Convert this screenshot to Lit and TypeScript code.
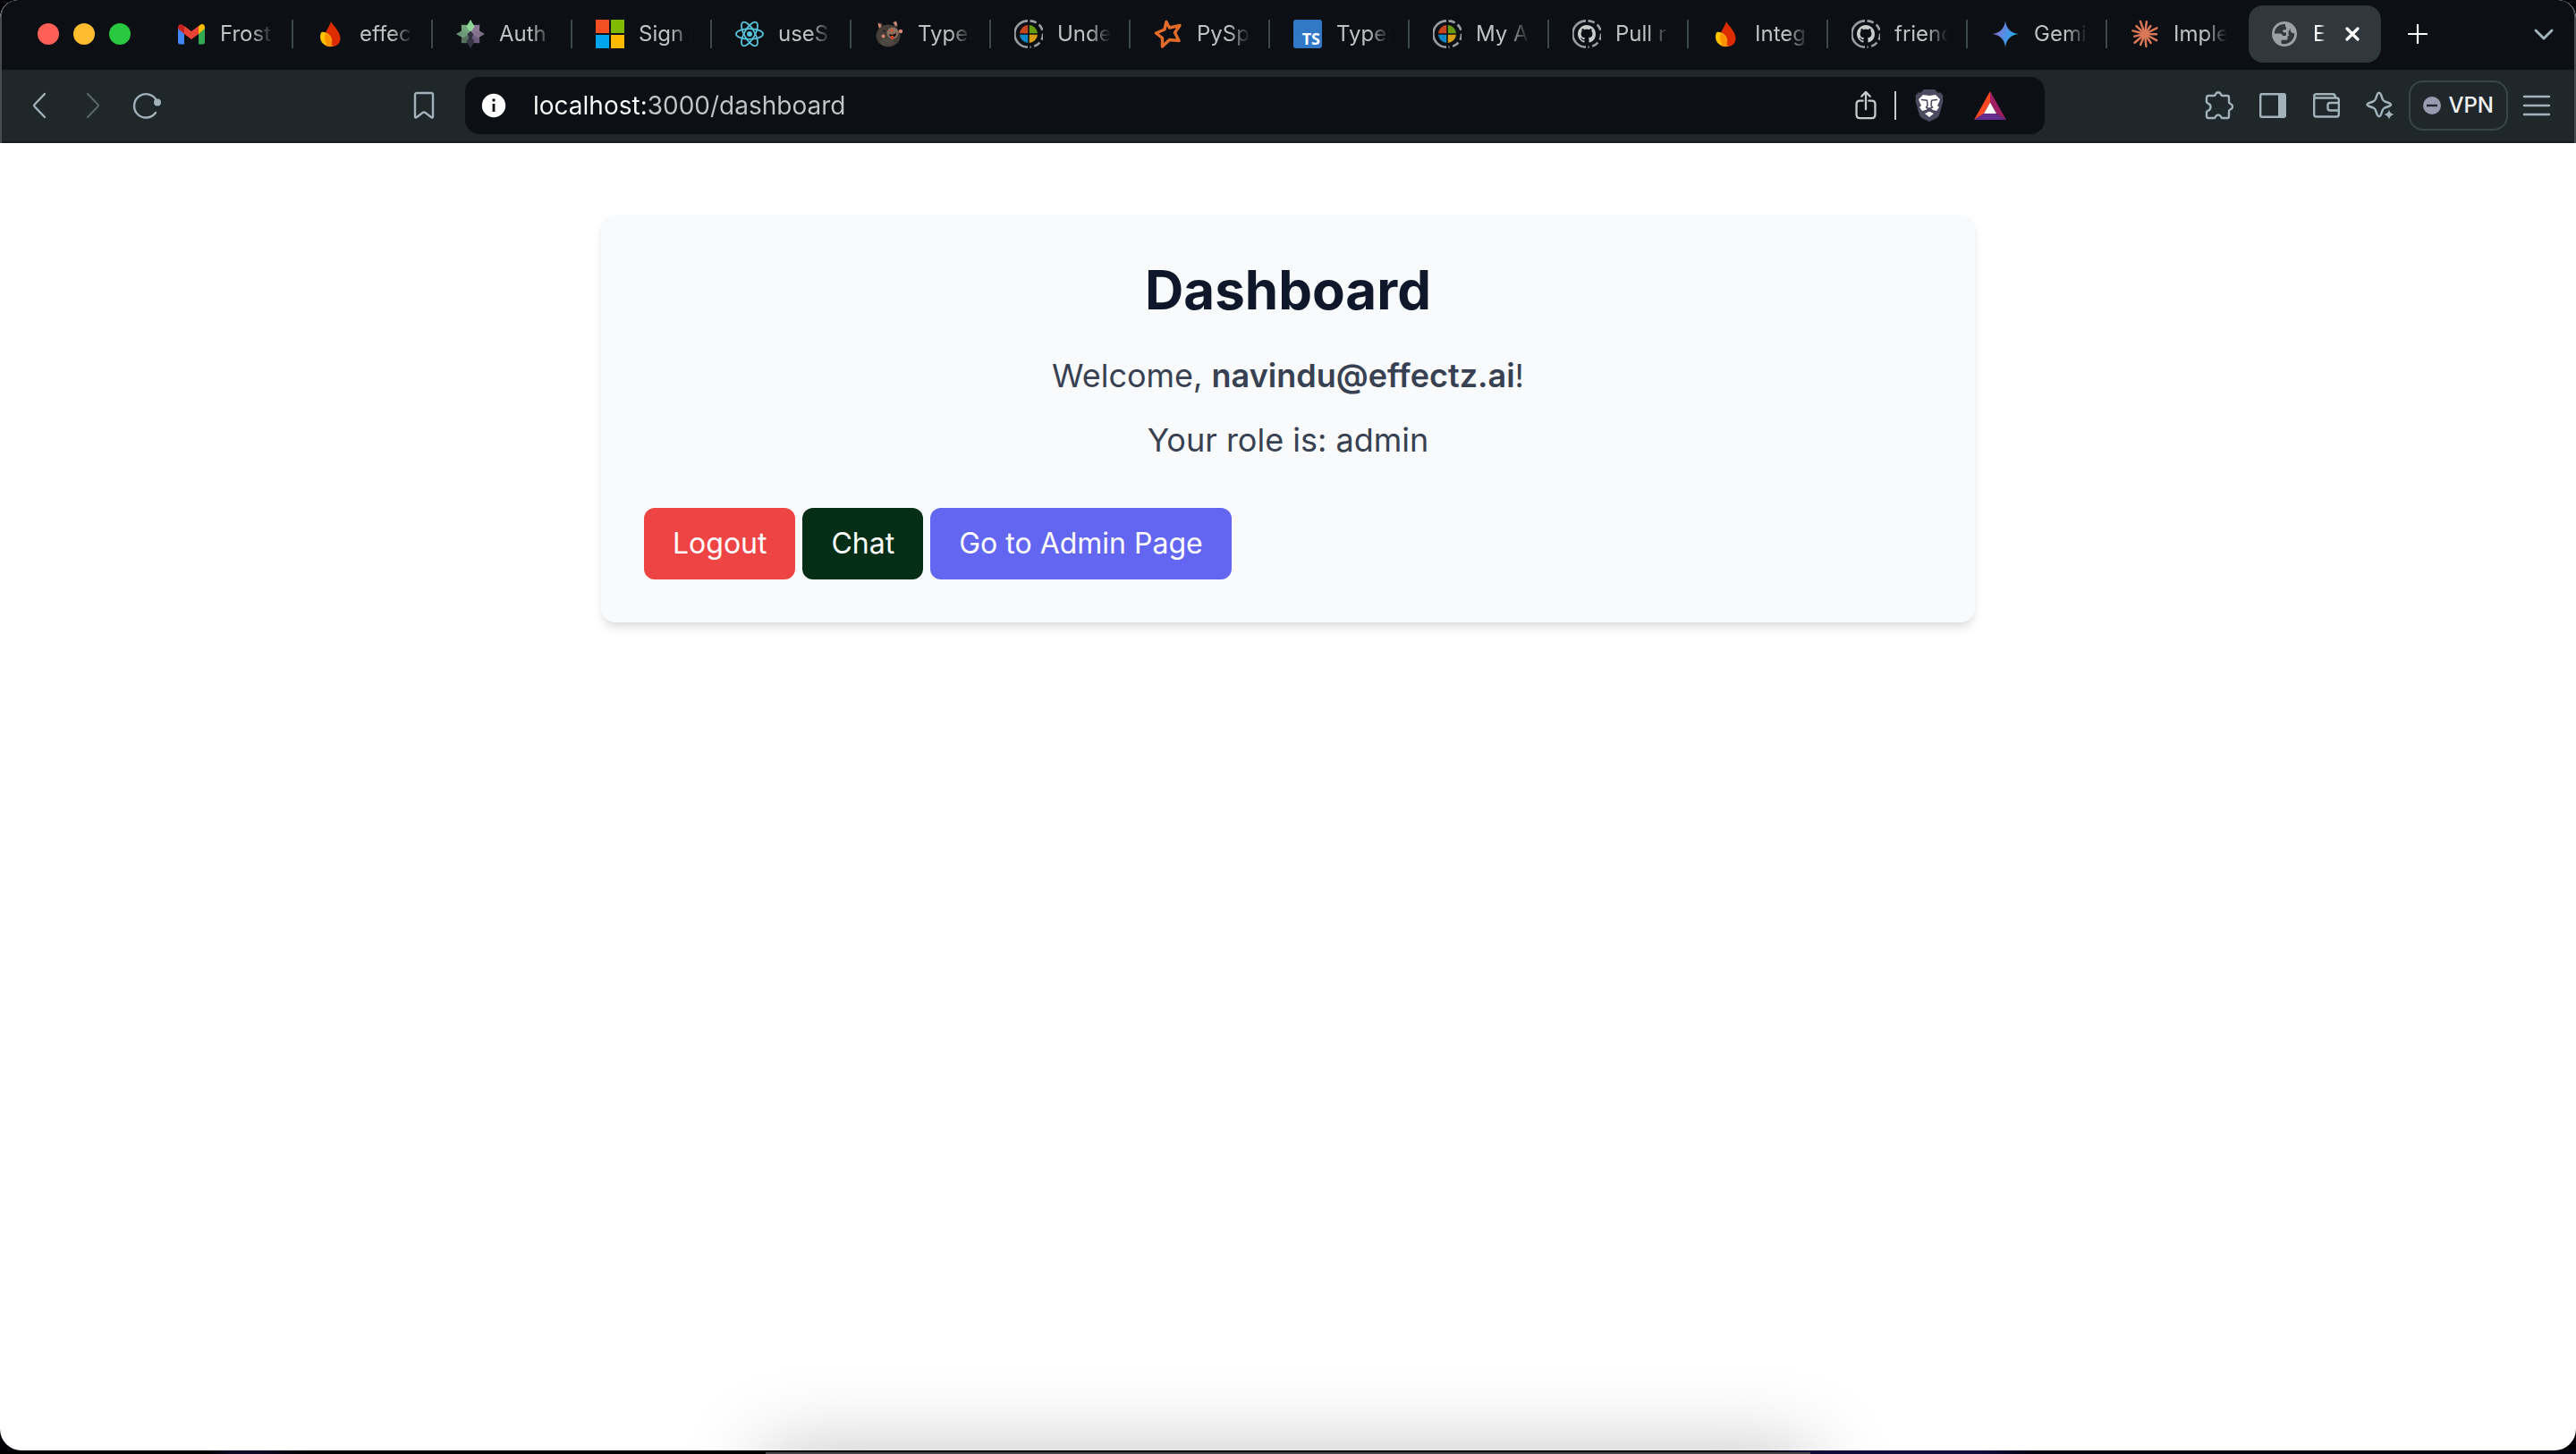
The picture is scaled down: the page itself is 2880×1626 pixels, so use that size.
import { LitElement, html, svg, css, TemplateResult } from "lit";
import { customElement, property } from "lit/decorators.js";
import { classMap } from "lit/directives/class-map.js";

/* ---------- favicons, 32 x 32 ---------- */

const gmail = svg`
  <path fill="#4285f4" d="M1 9v16.500a2 2 0 0 0 2 2h5V15z"/>
  <path fill="#34a853" d="M24 15v12.500h5a2 2 0 0 0 2-2V9z"/>
  <path fill="#fbbc04" d="M24 7.500V16l7-6V8.500c0-3-3-4.600-5.500-2.400z"/>
  <path fill="#ea4335" d="M8 16V7l8 6 8-6v9l-8 6z"/>
  <path fill="#c5221f" d="M1 8.500V10l7 6V7.500L6.500 6.100C4 4.300 1 5.500 1 8.500z"/>`;

const flame = svg`
  <path fill="#dd2c00" d="M16 2c1.500 4 10 10 10.500 18.500C26.500 26 23 30 17.500 30S9 26 9 20C9 13 14 9 16 2z"/>
  <path fill="#ffc400" d="M5.500 14c5-1 10 3 11.500 8 .8 3.500-.5 6.500-2.500 7.700C9 29.500 4 25.500 4 19c0-2 .5-4 1.500-5z"/>
  <path fill="#ff9100" d="M10 15.500c4 1.500 6.500 5 7 8.500.3 2.500-.8 4.800-2.500 5.700C11 28.500 9 25 9 20c0-1.700.3-3 1-4.500z"/>
  <path fill="#ff9100" d="M9 28.500c3 2 7 2 10 1-2.500-2-6-2.500-10-1z"/>`;

/* Star of four kites over four squarer diagonal petals, green on the left, purple on the right. */
const DIAGONAL = ["#8b7698", "#6b5a7c", "#55705f", "#74a57f"];
const STRAIGHT = ["#93dc9b", "#85738f", "#393545", "#6f9c79"];
const burst = svg`
  ${DIAGONAL.map((c, i) => svg`<polygon transform="rotate(${45 + i * 90} 16 16)" fill=${c} points="16,1.500 22.500,8.500 16,16 9.500,8.500"/>`)}
  ${STRAIGHT.map((c, i) => svg`<polygon transform="rotate(${i * 90} 16 16)" fill=${c} fill-opacity="0.95" points="16,0 20.500,7.500 16,15 11.500,7.500"/>`)}
  <path fill="#332f40" d="M16 12.500l3.500 4-3.500 6-3.500-6z"/>`;

const windowsMark = svg`
  <path fill="#f25022" d="M0 0h15v15H0z"/><path fill="#7fba00" d="M17 0h15v15H17z"/>
  <path fill="#00a4ef" d="M0 17h15v15H0z"/><path fill="#ffb900" d="M17 17h15v15H17z"/>`;

const react = svg`
  <g fill="none" stroke="#58c4dc" stroke-width="1.800">
    ${[0, 60, 120].map((a) => svg`<ellipse cx="16" cy="16" rx="15" ry="5.800" transform="rotate(${a} 16 16)"/>`)}
  </g><circle cx="16" cy="16" r="3" fill="#58c4dc"/>`;

const bear = svg`
  <path fill="#4c433d" d="M3 3l5 1 1 5-4 2zM20 3l4-2 2 6-3 3z"/>
  <path fill="#d98872" d="M3.500 4.500l3 .5 1 4-2.500 1zM21 3l3-1 1 4-2 1z"/>
  <ellipse cx="15" cy="18" rx="13.500" ry="12.500" fill="#453e39"/>
  <ellipse cx="14" cy="25" rx="8" ry="4" fill="#4f4741"/>
  <path fill="none" stroke="#4c433d" stroke-width="3" d="M24 15l4-2"/>
  <circle cx="29" cy="13" r="2.200" fill="#d98872"/>
  <circle cx="20" cy="15" r="6.500" fill="#8b6f5f"/>
  <ellipse cx="19" cy="12" rx="1.800" ry="1.200" fill="#e0572a"/>
  <path fill="#1e1512" d="M16 16c3 1.500 6 .5 8-1.500.5 3-2 5.500-4.500 5.300C17.500 19.600 16.300 18 16 16z"/>
  <path fill="#d8422b" d="M18 18h3v3.500q-1.500 1-3 0z"/>
  <circle cx="9.500" cy="18.500" r="1.900" fill="#d98872"/><circle cx="10.500" cy="12.500" r="1.100" fill="#15110f"/>`;

/* Ring drawn around the favicon of a sleeping tab: solid left half, dashed right half. */
const ring = svg`<g fill="none" stroke="#989da3" stroke-width="2.600">
  <path d="M15 1.400A14.600 14.600 0 0 0 15 30.600"/>
  <path stroke-dasharray="7.500 3.600" d="M17.500 1.400A14.600 14.600 0 0 1 17.500 30.600"/></g>`;

const azure = svg`${ring}
  <path fill="#c8441c" d="M15.200 6v9.200H6A10 10 0 0 1 15.200 6z"/>
  <path fill="#669a10" d="M16.800 6v9.200H26A10 10 0 0 0 16.800 6z"/>
  <path fill="#0d88c4" d="M15.200 26v-9.200H6A10 10 0 0 0 15.200 26z"/>
  <path fill="#d79d14" d="M16.800 26v-9.200H26A10 10 0 0 1 16.800 26z"/>`;

const github = svg`${ring}
  <path transform="translate(6 6) scale(1.250)" fill="#c9cbcd" d="M8 0C3.580 0 0 3.580 0 8c0 3.540 2.290 6.530 5.470 7.590.4.07.55-.17.55-.38 0-.19-.01-.82-.01-1.490-2.010.37-2.530-.49-2.690-.94-.09-.23-.48-.94-.82-1.130-.28-.15-.68-.52-.01-.53.63-.01 1.080.58 1.230.82.72 1.210 1.870.87 2.330.66.07-.52.28-.87.51-1.070-1.780-.2-3.640-.89-3.640-3.950 0-.87.31-1.590.82-2.150-.08-.2-.36-1.020.08-2.120 0 0 .67-.21 2.200.82.64-.18 1.320-.27 2-.27s1.360.09 2 .27c1.530-1.040 2.200-.82 2.200-.82.44 1.100.16 1.920.08 2.120.51.56.82 1.270.82 2.150 0 3.070-1.870 3.750-3.650 3.950.29.25.54.73.54 1.480 0 1.070-.01 1.930-.01 2.200 0 .21.15.46.55.38A8.010 8.010 0 0 0 16 8c0-4.420-3.580-8-8-8z"/>`;

const spark = svg`<path fill="none" stroke="#e36b2a" stroke-width="3.400" stroke-linejoin="round"
  d="M14 2.500L17.500 9 29 6.500 23.500 14.500 28 23.500 17.500 22.500 9.500 30 9.500 20.500 2.500 15 12 11z"/>`;

const tsMark = svg`<rect width="32" height="32" rx="3" fill="#3178c6"/>
  <text x="30" y="28" text-anchor="end" font-family="Open Sans, sans-serif" font-weight="700" font-size="18" fill="#fff">TS</text>`;

const gemini = svg`<defs><linearGradient id="gm" x1="0" x2="1" y1="0.300" y2="0.700">
    <stop offset="0" stop-color="#a06bc4"/><stop offset="0.500" stop-color="#4f8fe6"/><stop offset="1" stop-color="#16b4e8"/>
  </linearGradient></defs>
  <path fill="url(#gm)" d="M16 1c1 9 6 14 15 15-9 1-14 6-15 15-1-9-6-14-15-15 9-1 14-6 15-15z"/>`;

const RAYS = [14, 11, 15, 13, 15, 12, 14, 13, 15, 12, 14, 13, 15];
const claude = svg`<g stroke="#d97757" stroke-width="2.500" stroke-linecap="round">
  ${RAYS.map((r, i) => {
    const a = ((i * 360) / RAYS.length + 8) * (Math.PI / 180);
    return svg`<line x1="16" y1="16" x2=${16 + Math.sin(a) * r} y2=${16 - Math.cos(a) * r}/>`;
  })}</g><circle cx="16" cy="16" r="4" fill="#d97757"/>`;

const globe = svg`<circle cx="16" cy="16" r="14" fill="#9ca0a7"/>
  <path fill="#30383d" d="M17 5C10.500 4.300 5 9 4.800 15.600H11q2.500 0 3 2.400h2.500q1.500 0 1.500-1.600V14.500l-2.500-.3q-1.500-.2-1.500-1.500t1.500-1.500h1.200q1.500 0 1.500-1.500 0-1.200-1.200-1.600z"/>
  <path fill="#30383d" d="M22.500 10q0 3.500 1.500 4.500 1 .8 3.200.8C27.300 22 22 27.300 15.500 27.200q-1.700 0-3-.4v-2.600q0-1.400 1.500-1.400h4q1.500 0 1.500-1.500v-2q0-1.500 1.500-1.500h.5q-1.500-2-1-4.500z"/>`;

/* Titles as far as a narrow tab has room for them. */
const TABS: Array<{ icon: TemplateResult; title: string }> = [
  { icon: gmail, title: "Frost" },
  { icon: flame, title: "effec" },
  { icon: burst, title: "Auth" },
  { icon: windowsMark, title: "Sign i" },
  { icon: react, title: "useS" },
  { icon: bear, title: "TypeS" },
  { icon: azure, title: "Unde" },
  { icon: spark, title: "PySp" },
  { icon: tsMark, title: "TypeS" },
  { icon: azure, title: "My A" },
  { icon: github, title: "Pull r" },
  { icon: flame, title: "Integ" },
  { icon: github, title: "friend" },
  { icon: gemini, title: "Gemi" },
  { icon: claude, title: "Imple" },
];

const icon = (w: number, h: number, body: TemplateResult) =>
  html`<svg width=${w} height=${h} viewBox="0 0 ${w} ${h}" fill="none" aria-hidden="true">${body}</svg>`;

/* ---------- one browser tab ---------- */

@customElement("browser-tab")
export class BrowserTab extends LitElement {
  @property({ attribute: false }) icon!: TemplateResult;
  @property() title = "";
  @property({ type: Boolean }) divided = false;

  static styles = css`
    :host { display: block; width: 156px; min-width: 0; }
    .tab {
      display: flex; align-items: center; gap: 16px;
      width: 100%; height: 32px; padding: 0 20px 0 26px; box-sizing: border-box;
      border: 0; border-right: 2px solid transparent; background: none;
      font: 24px/32px Inter, "Liberation Sans", sans-serif; color: #c0c1c3; text-align: left;
    }
    .divided { border-right-color: #3d484d; }
    svg { flex: none; }
    .label {
      flex: 1; min-width: 0; overflow: hidden; white-space: nowrap;
      mask-image: linear-gradient(90deg, #000 calc(100% - 24px), transparent);
    }
  `;

  render() {
    return html`<button class=${classMap({ tab: true, divided: this.divided })}>
      ${icon(32, 32, this.icon)}<span class="label">${this.title}</span>
    </button>`;
  }
}

/* ---------- tab strip ---------- */

@customElement("tab-strip")
export class TabStrip extends LitElement {
  static styles = css`
    :host { display: block; background: #0c0f13; }
    .strip { display: flex; align-items: center; height: 76px; padding-bottom: 2px; }
    button { border: 0; padding: 0; background: none; display: flex; }
    .lights { display: flex; flex: none; gap: 16px; padding: 0 26px 0 40px; }
    .light { width: 24px; height: 24px; border-radius: 50%; }
    .close { background: #ff5f57; }
    .min { background: #febc2e; }
    .max { background: #28c840; }
    .tabs { display: flex; align-items: center; min-width: 0; }
    .active {
      display: flex; align-items: center; box-sizing: border-box;
      flex: none; width: 148px; height: 64px; margin: 0 30px 0 2px; padding: 0 24px;
      border-radius: 16px; background: #30383d;
      font: 24px/32px Inter, "Liberation Sans", sans-serif; color: #fff;
    }
    .name {
      flex: none; width: 14px; margin: 0 22px 0 16px;
      mask-image: linear-gradient(90deg, #000 50%, transparent);
    }
    .list { margin: 0 22px 0 auto; }
  `;

  render() {
    return html`<div class="strip">
      <div class="lights">
        <button class="light close" aria-label="Close window"></button>
        <button class="light min" aria-label="Minimize"></button>
        <button class="light max" aria-label="Zoom"></button>
      </div>
      <nav class="tabs" aria-label="Tabs">
        ${TABS.map((t, i) => html`<browser-tab .icon=${t.icon} .title=${t.title} ?divided=${i < TABS.length - 1}></browser-tab>`)}
        <div class="active">
          ${icon(32, 32, globe)}<span class="name">E</span>
          <button aria-label="Close tab">
            ${icon(16, 16, svg`<path stroke="#fff" stroke-width="3.200" stroke-linecap="round" d="M2 2l12 12M14 2L2 14"/>`)}
          </button>
        </div>
      </nav>
      <button aria-label="New tab">
        ${icon(22, 22, svg`<path stroke="#fff" stroke-width="2.200" stroke-linecap="round" d="M11 1v20M1 11h20"/>`)}
      </button>
      <button class="list" aria-label="Search tabs">
        ${icon(24, 16, svg`<path stroke="#a1b2ba" stroke-width="3" stroke-linecap="round" stroke-linejoin="round" d="M3 4l9 9 9-9"/>`)}
      </button>
    </div>`;
  }
}

/* ---------- toolbar with the address bar ---------- */

@customElement("tool-bar")
export class ToolBar extends LitElement {
  static styles = css`
    :host { display: block; background: #20272a; border-bottom: 2px solid #171b1f; }
    .bar {
      display: grid; grid-template-columns: 518fr 1766fr 592fr; align-items: center;
      height: 80px; color: #a1b2ba;
    }
    button { border: 0; padding: 0; background: none; display: flex; align-items: center; color: inherit; }
    svg { stroke-width: 2.400; stroke-linecap: round; stroke-linejoin: round; }
    .nav { display: flex; align-items: center; padding: 0 34px 0 32px; }
    .back { margin-right: 42px; }
    .forward { margin-right: 32px; color: #566266; }
    .mark { margin-left: auto; }
    .address {
      display: flex; align-items: center; height: 64px; box-sizing: border-box;
      padding: 0 42px 0 18px; border-radius: 16px; background: #0c0f13; min-width: 0;
    }
    .url {
      flex: 1; min-width: 0; height: 48px; padding: 0; margin: 0 0 0 30px; border: 0; outline: 0;
      font: 28px/48px Inter, "Liberation Sans", sans-serif;
      background: linear-gradient(90deg, #fff 127px, #c4c5c7 127px);
      background-clip: text; -webkit-background-clip: text; -webkit-text-fill-color: transparent;
    }
    .rule { width: 2px; height: 32px; margin: 0 20px; background: #c9cacb; }
    .bat { margin-left: 32px; }
    .tools { display: flex; align-items: center; justify-content: flex-end; gap: 28px; padding-right: 26px; }
    .vpn {
      gap: 8px; height: 56px; margin: 0 -12px; padding: 0 14px; box-sizing: border-box;
      border: 2px solid #38454a; border-radius: 16px; color: #f2f3f4;
      font: 500 24px/32px Inter, "Liberation Sans", sans-serif;
    }
  `;

  render() {
    return html`<div class="bar">
      <div class="nav">
        <button class="back" aria-label="Back">${icon(20, 30, svg`<path stroke="currentColor" d="M16 2L4.500 14q-.8 1 0 2L16 28"/>`)}</button>
        <button class="forward" aria-label="Forward">${icon(20, 30, svg`<path stroke="currentColor" d="M2 2l11.500 12q.8 1 0 2L2 28"/>`)}</button>
        <button aria-label="Reload">${icon(34, 32, svg`
          <path stroke="currentColor" d="M27.500 11.500A13.200 13.200 0 1 0 26 24"/>
          <circle cx="28" cy="12.500" r="4" fill="currentColor"/>`)}</button>
        <button class="mark" aria-label="Bookmark this page">${icon(24, 32, svg`
          <path stroke="currentColor" d="M4 2h16q2 0 2 2v24q0 2.500-2 1l-6.500-5q-1.500-1-3 0L4 29q-2 1.500-2-1V4q0-2 2-2z"/>`)}</button>
      </div>
      <label class="address">
        ${icon(28, 28, svg`<circle cx="14" cy="14" r="13.200" fill="#fff"/>
          <circle cx="14" cy="8" r="1.700" fill="#0c0f13"/><path stroke="#0c0f13" stroke-width="2.800" stroke-linecap="butt" d="M14 12v9"/>`)}
        <input class="url" type="text" aria-label="Address" value="localhost:3000/dashboard" />
        <button aria-label="Share">${icon(24, 34, svg`<g stroke="#c9cacb">
          <path d="M8.500 12H5q-4 0-4 4v12q0 4 4 4h14q4 0 4-4V16q0-4-4-4h-3.500M12 22V2.500M7 7l5-5 5 5" transform="translate(.6 0) scale(.95 .97)"/></g>`)}</button>
        <span class="rule"></span>
        <button aria-label="Shields">${icon(34, 36, svg`
          <path fill="#4b4a5e" d="M11 0h12l4 4 2-1 3.500 4-.5 3 .5 3-4.500 16q-.8 2-3 3.200L17 36l-8-3.800q-2.200-1.200-3-3.200L1.500 13 2 10 1.500 7 5 3l2 1z"/>
          <path fill="#fff" d="M10 6l7 1 7-1 5 5-1 3-2 4 2 2-3 4-4-1-4-3-4 3-4 1-3-4 2-2-2-4-1-3z"/>
          <path fill="#fff" d="M17 24.500l5 2.500-5 4-5-4z"/>
          <path stroke="#4b4a5e" stroke-width="1.500" d="M8.500 11.500l6 .8.500 5.700-1.500 2 3.500 2 3.500-2-1.500-2 .5-5.700 6-.8M17 22v2M12 25.500l5-2.500 5 2.500"/>`)}</button>
        <button class="bat" aria-label="Rewards">${icon(38, 32, svg`
          <path fill="#ff4724" d="M19 0v12.500L12 25 1 32z"/>
          <path fill="#9e1f63" d="M19 0v12.500L26 25l11 7z"/>
          <path fill="#662d91" d="M1 32l11-7h14l11 7z"/>
          <path fill="#fff" d="M19 12.500L26 25H12z"/>`)}</button>
      </label>
      <div class="tools">
        <button aria-label="Extensions">${icon(32, 32, svg`
          <path stroke="currentColor" d="M2 7q0-2 2-2h6q1.500 0 2-1.500 1-2.300 3-2.300t3 2.300Q18.500 5 20 5h5q2 0 2 2v5q0 1.500 1.500 2 2.500 1 2.500 3.200T28.500 20.500Q27 21 27 22.500V28q0 2-2 2h-5.500q-1 0-1.500-1.500Q17 26.500 15 26.500t-3 2q-.5 1.500-1.500 1.500H4q-2 0-2-2v-4.500q0-1 1-1.300 3.500-1.500 3.500-4.700T3 13.300q-1-.5-1-1.300z"/>`)}</button>
        <button aria-label="Sidebar">${icon(32, 30, svg`
          <rect x="2.200" y="2.200" width="27.600" height="25.600" rx="1.500" stroke="currentColor"/>
          <path fill="currentColor" d="M22 2h8v26h-8z"/>`)}</button>
        <button aria-label="Wallet">${icon(32, 30, svg`<g stroke="currentColor">
          <path d="M2.200 7V25q0 2.500 2.500 2.500h22.600q2.500 0 2.500-2.500V9q0-2.500-2.500-2.500H4q-1.800 0-1.800-2T4.500 2.200h18.500q3 0 3 4"/>
          <path d="M29.500 12H20q-2.500 0-2.500 2.500v3.500q0 2.500 2.500 2.500h9.500"/></g>`)}</button>
        <button aria-label="Leo assistant">${icon(32, 32, svg`
          <path stroke="currentColor" d="M12.800 3.500q2-3.500 4 0l2 5.500q.8 1.700 2.500 2.500l5.500 2q2.800 1.500 0 3l-5.500 2q-1.700.8-2.500 2.500l-2 5.500q-2 3.500-4 0l-2-5.500q-.8-1.700-2.500-2.500l-5.500-2q-2.800-1.500 0-3l5.500-2q1.700-.8 2.500-2.500z"/>
          <path fill="currentColor" d="M26 20.500q1 4.500 5.500 5.500-4.500 1-5.500 5.500-1-4.500-5.500-5.500 4.500-1 5.500-5.500z"/>`)}</button>
        <button class="vpn">${icon(20, 20, svg`<circle cx="10" cy="10" r="10" fill="#989bb0"/>
          <path stroke="#20272a" stroke-linecap="butt" d="M4 10h12"/>`)}<span>VPN</span></button>
        <button aria-label="Menu">${icon(32, 26, svg`<path stroke="currentColor" d="M2 3h28M2 13h28M2 23h28"/>`)}</button>
      </div>
    </div>`;
  }
}

/* ---------- dashboard card ---------- */

@customElement("dashboard-card")
export class DashboardCard extends LitElement {
  @property() email = "navindu@effectz.ai";
  @property() role = "admin";

  static styles = css`
    :host { display: block; font-family: Inter, "Liberation Sans", sans-serif; }
    .card {
      max-width: 1536px; box-sizing: border-box; margin: 80px auto 0; padding: 48px;
      border-radius: 16px; background: #f9fafc;
      box-shadow: 0 8px 12px -2px rgb(0 0 0 / 0.1), 0 4px 8px -4px rgb(0 0 0 / 0.1);
    }
    h1 { margin: 0 0 32px; font-size: 60px; line-height: 72px; font-weight: 700; text-align: center; color: #0f172a; }
    p { margin: 0 0 16px; font-size: 36px; line-height: 56px; text-align: center; color: #374151; }
    strong { font-weight: 600; }
    .actions { display: flex; flex-wrap: wrap; gap: 8px; margin-top: 48px; }
    .action {
      padding: 16px 32px; border: 0; border-radius: 12px; color: #fff;
      font-family: inherit; font-size: 32px; line-height: 48px; font-weight: 400;
    }
    .logout { background: #ef4444; }
    .chat { background: #052e16; }
    .admin { background: #6366f1; }
  `;

  render() {
    return html`<section class="card">
      <h1>Dashboard</h1>
      <p>Welcome, <strong>${this.email}</strong>!</p>
      <p>Your role is: ${this.role}</p>
      <div class="actions">
        <button class="action logout">Logout</button>
        <button class="action chat">Chat</button>
        <button class="action admin">Go to Admin Page</button>
      </div>
    </section>`;
  }
}

/* ---------- desktop with the browser window on it ---------- */

@customElement("app-root")
export class AppRoot extends LitElement {
  static styles = css`
    :host { display: flex; flex-direction: column; min-height: 100vh; position: relative; overflow: hidden; background: #020106; }
    .window { flex: 1; display: flex; flex-direction: column; border-radius: 20px 20px 24px 24px; overflow: hidden; background: #fff; }
    .page { flex: 1; padding: 0 24px; }
    .desk { height: 4px; background: linear-gradient(90deg, #000 0 8%, #0d0826 9% 10%, #000 12% 68%, #100b3a 70% 77%, #03020f 79%); }
    .chrome { background: #464b4e; padding: 0 2px; border-radius: 20px 20px 0 0; overflow: hidden; }
    tab-strip { border-radius: 18px 18px 0 0; }
    .dock {
      position: absolute; top: calc(100% - 2px); left: 50%; width: 1168px; height: 120px; margin-left: -584px;
      background: #47474b; box-shadow: 0 0 90px rgb(0 0 0 / 0.25);
    }
  `;

  render() {
    return html`
      <div class="window">
        <header class="chrome"><tab-strip></tab-strip><tool-bar></tool-bar></header>
        <main class="page"><dashboard-card></dashboard-card></main>
      </div>
      <div class="desk"></div>
      <div class="dock"></div>
    `;
  }
}
